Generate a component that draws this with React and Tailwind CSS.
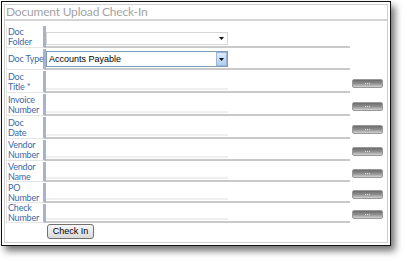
const rows = [
  { label: ['Doc', 'Folder'], h: 'h-[22px]', type: 'folder' },
  { label: ['Doc Type'], h: 'h-[21px]', type: 'doctype' },
  { label: ['Doc', 'Title *'], h: 'h-[22px]', type: 'text' },
  { label: ['Invoice', 'Number'], h: 'h-[22px]', type: 'text' },
  { label: ['Doc', 'Date'], h: 'h-[22px]', type: 'text' },
  { label: ['Vendor', 'Number'], h: 'h-[21px]', type: 'text' },
  { label: ['Vendor', 'Name'], h: 'h-[20px]', type: 'text' },
  { label: ['PO', 'Number'], h: 'h-[20px]', type: 'text' },
  { label: ['Check', 'Number'], h: 'h-[19px]', type: 'text' },
];

function Arrow() {
  return (
    <svg width="5" height="3" viewBox="0 0 5 3">
      <path d="M0 0H5L2.5 3Z" fill="#111" />
    </svg>
  );
}

function DotsButton() {
  return (
    <div className="w-[31px] h-[9px] rounded-[2px] border border-[#999] bg-linear-to-b from-[#6c6c6c] via-[#8f8f8f] to-[#d2d2d2] flex items-center justify-center">
      <div className="flex gap-[1px]">
        <div className="w-[1px] h-[1px] bg-[#e0e0e0]" />
        <div className="w-[1px] h-[1px] bg-[#e0e0e0]" />
        <div className="w-[1px] h-[1px] bg-[#e0e0e0]" />
      </div>
    </div>
  );
}

function Control({ type }) {
  if (type === 'folder') {
    return (
      <div className="w-[182px] h-[13px] border border-[#d6d6d6] bg-white flex items-center justify-end pr-[3px]">
        <Arrow />
      </div>
    );
  }
  if (type === 'doctype') {
    return (
      <div className="w-[182px] h-[16px] border border-[#7f9db9] bg-white flex items-stretch">
        <div className="flex-1 flex items-center pl-[2px] text-[9px] leading-none text-black font-['Liberation_Sans',Arial,sans-serif]">
          Accounts Payable
        </div>
        <div className="w-[11px] border border-[#9ab6da] bg-linear-to-b from-[#dce9fa] to-[#b3cdee] flex items-center justify-center">
          <Arrow />
        </div>
      </div>
    );
  }
  return <div className="w-[182px] h-[14px] border-b-2 border-[#efefef]" />;
}

export default function App() {
  return (
    <div className="w-[407px] h-[263px] bg-white overflow-hidden pt-[1px] pl-[1px]">
      <div className="w-[390px] h-[245px] border border-[#111] bg-white p-[2px] shadow-[4px_5px_7px_rgba(0,0,0,0.55)]">
        <div className="h-full border border-[#d0d0d0] flex flex-col">
          <div className="h-[14px] box-content border-b-2 border-[#d4d4d4] pl-[1px] text-[12px] leading-[14px] tracking-[-0.2px] text-[#a3a3a3] font-['Lato',sans-serif]">
            Document Upload Check-In
          </div>
          <div className="mt-[5px] ml-[1px] flex flex-col gap-[1px]">
            {rows.map((r, i) => (
              <div key={i} className={`flex ${r.h}`}>
                <div className="w-[40px] shrink-0 border-l border-b border-[#e6e6e6] border-r-[3px] border-r-[#a7b3c8] pl-[1px] flex items-center whitespace-nowrap text-[9px] leading-[10px] tracking-[-0.2px] text-[#3d68a8] font-['Lato',sans-serif]">
                  <div>
                    {r.label.map((l, j) => (
                      <div key={j}>{l}</div>
                    ))}
                  </div>
                </div>
                <div className="w-[304px] shrink-0 border-b-2 border-[#c9c9c9] flex items-end pb-[1px]">
                  <Control type={r.type} />
                </div>
                <div className="ml-[2px] flex items-center pt-[2px]">
                  {r.type === 'text' && <DotsButton />}
                </div>
              </div>
            ))}
          </div>
          <div className="mt-[1px] ml-[42px]">
            <button className="w-[47px] h-[15px] rounded-[3px] border border-[#707070] bg-linear-to-b from-[#f7f7f7] to-[#d9d9d9] text-[9px] leading-none text-black font-['Liberation_Sans',Arial,sans-serif] flex items-center justify-center">
              Check In
            </button>
          </div>
        </div>
      </div>
    </div>
  );
}
